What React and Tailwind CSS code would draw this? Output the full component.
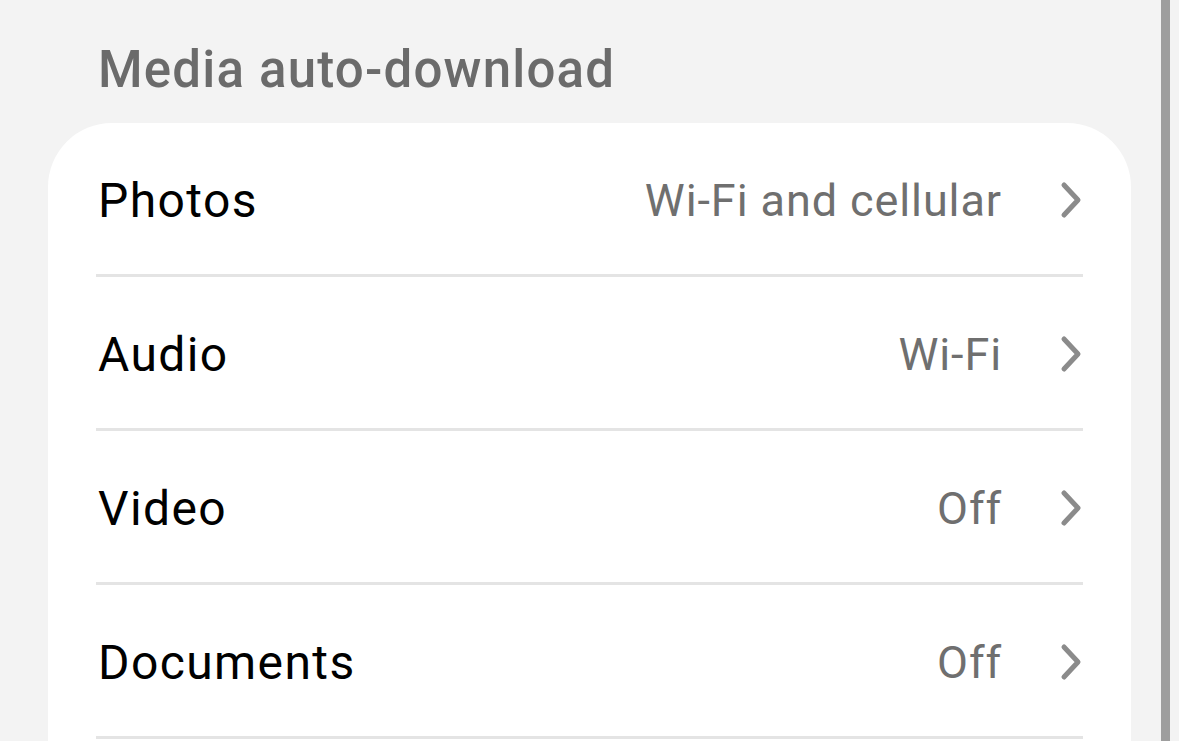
import React from 'react';

const rows = [
  { label: 'Photos', value: 'Wi-Fi and cellular' },
  { label: 'Audio', value: 'Wi-Fi' },
  { label: 'Video', value: 'Off' },
  { label: 'Documents', value: 'Off' },
];

function Chevron() {
  return (
    <svg width="26" height="38" viewBox="0 0 26 38" fill="none" className="shrink-0">
      <path
        d="M6 4 L20 19 L6 34"
        stroke="#8b8b8b"
        strokeWidth="5"
        strokeLinecap="round"
        strokeLinejoin="round"
      />
    </svg>
  );
}

function SettingRow({ label, value }) {
  return (
    <div className="mx-[48px] border-b-[3px] border-[#e4e4e4]">
      <div className="h-[151px] flex items-center pl-[2px]">
        <span className="pt-[4px] text-[48px] tracking-[1.4px] text-black leading-none">{label}</span>
        <span className="pt-[4px] ml-auto text-[45px] tracking-[0.9px] text-[#6f6f6f] leading-none">{value}</span>
        <span className="ml-[56px] mr-[-1px] pt-[2px]">
          <Chevron />
        </span>
      </div>
    </div>
  );
}

export default function App() {
  return (
    <div
      className="w-[1179px] h-[741px] overflow-hidden bg-[#f3f3f3] flex"
      style={{ fontFamily: 'Roboto, "Noto Sans", sans-serif' }}
    >
      <div className="flex-1 flex flex-col">
        <div className="h-[123px] pl-[98px] flex items-start pt-[44px]">
          <h2 className="text-[51px] tracking-[1.2px] font-medium text-[#6b6b6b] leading-none">Media auto-download</h2>
        </div>
        <div className="ml-[48px] mr-[30px] bg-white rounded-t-[64px] flex-1">
          {rows.map((row) => (
            <SettingRow key={row.label} {...row} />
          ))}
        </div>
      </div>
      <div className="w-[18px] flex">
        <div className="w-[9px] bg-[#9e9e9e]" />
      </div>
    </div>
  );
}
